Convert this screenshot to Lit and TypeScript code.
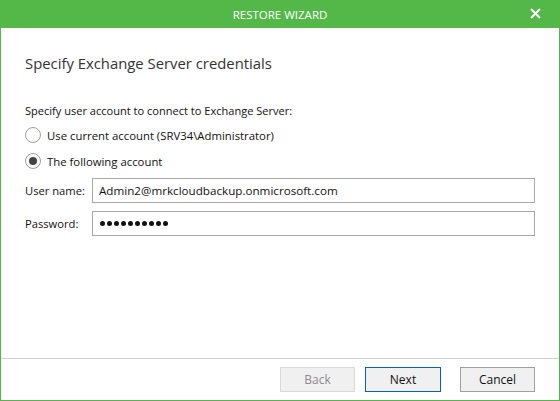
import { LitElement, html, css } from "lit";
import { customElement } from "lit/decorators.js";

@customElement("app-root")
export class AppRoot extends LitElement {
  static styles = css`
    :host {
      display: block;
      width: 560px;
      height: 401px;
      font-family: "Open Sans", "Noto Sans", sans-serif;
      font-size: 12px;
      color: #111;
    }
    .window {
      box-sizing: border-box;
      width: 560px;
      height: 401px;
      display: flex;
      flex-direction: column;
      background: #fff;
      border: 1px solid #54b848;
      border-top: 0;
    }
    .titlebar {
      height: 28px;
      margin: 0 -1px;
      flex: none;
      background: #54b848;
      color: #fff;
      display: flex;
      align-items: center;
      justify-content: center;
      position: relative;
      font-size: 11.5px;
    }
    .close {
      position: absolute;
      right: 19px;
      top: 8px;
      width: 11px;
      height: 11px;
      display: block;
    }
    .content {
      flex: 1;
      padding: 24px 24px 0 24px;
      display: flex;
      flex-direction: column;
    }
    h1 {
      margin: 0;
      font-weight: 400;
      font-size: 14.85px;
      line-height: 22px;
      color: #333;
    }
    .prompt {
      margin-top: 29px;
      line-height: 16px;
      font-size: 11.05px;
    }
    .radio-row {
      display: flex;
      align-items: center;
      gap: 6px;
      height: 16px;
      font-size: 11.35px;
    }
    .radio-row.first { margin-top: 8px; }
    .radio-row.second { margin-top: 10px; }
    .radio {
      box-sizing: border-box;
      width: 16px;
      height: 16px;
      border-radius: 50%;
      border: 1px solid #a0a0a0;
      background: #fff;
      display: flex;
      align-items: center;
      justify-content: center;
      flex: none;
    }
    .dot {
      width: 8px;
      height: 8px;
      border-radius: 50%;
      background: #444;
    }
    .field {
      display: flex;
      align-items: center;
      height: 25px;
    }
    .field.user { margin-top: 9px; }
    .field.pass { margin-top: 8px; }
    .field label {
      width: 67px;
      flex: none;
      font-size: 11.2px;
    }
    .input {
      box-sizing: border-box;
      width: 443px;
      height: 25px;
      border: 1px solid #a9a9a9;
      padding: 0 6px;
      display: flex;
      align-items: center;
      background: #fff;
      font-size: 11.65px;
    }
    .dots {
      display: flex;
      gap: 2px;
      margin-left: 1px;
    }
    .dots span {
      width: 5px;
      height: 5px;
      border-radius: 50%;
      background: #111;
    }
    .footer {
      box-sizing: border-box;
      flex: none;
      height: 42px;
      border-top: 1px solid #d0d0d0;
      display: flex;
      align-items: flex-start;
      padding: 8px 24px 0 0;
      justify-content: flex-end;
    }
    .btn {
      box-sizing: border-box;
      width: 75px;
      height: 25px;
      background: #f0f0f0;
      border: 1px solid #a0a0a0;
      display: flex;
      align-items: center;
      justify-content: center;
      color: #111;
    }
    .btn.disabled {
      border-color: #d9d9d9;
      color: #8c8c8c;
    }
    .btn.primary {
      border-color: #0a64ad;
      width: 76px;
      margin-left: 10px;
      margin-right: 19px;
    }
  `;

  render() {
    const dots = Array.from({ length: 10 });
    return html`
      <div class="window">
        <div class="titlebar">
          RESTORE WIZARD
          <svg class="close" viewBox="0 0 11 11" aria-hidden="true">
            <path d="M1 1 L10 10 M10 1 L1 10" stroke="#fff" stroke-width="2" fill="none" />
          </svg>
        </div>
        <div class="content">
          <h1>Specify Exchange Server credentials</h1>
          <div class="prompt">Specify user account to connect to Exchange Server:</div>
          <div class="radio-row first">
            <span class="radio"></span>
            <span>Use current account (SRV34\\Administrator)</span>
          </div>
          <div class="radio-row second">
            <span class="radio"><span class="dot"></span></span>
            <span>The following account</span>
          </div>
          <div class="field user">
            <label>User name:</label>
            <div class="input">Admin2@mrkcloudbackup.onmicrosoft.com</div>
          </div>
          <div class="field pass">
            <label>Password:</label>
            <div class="input"><div class="dots">${dots.map(() => html`<span></span>`)}</div></div>
          </div>
        </div>
        <div class="footer">
          <div class="btn disabled">Back</div>
          <div class="btn primary">Next</div>
          <div class="btn">Cancel</div>
        </div>
      </div>
    `;
  }
}
